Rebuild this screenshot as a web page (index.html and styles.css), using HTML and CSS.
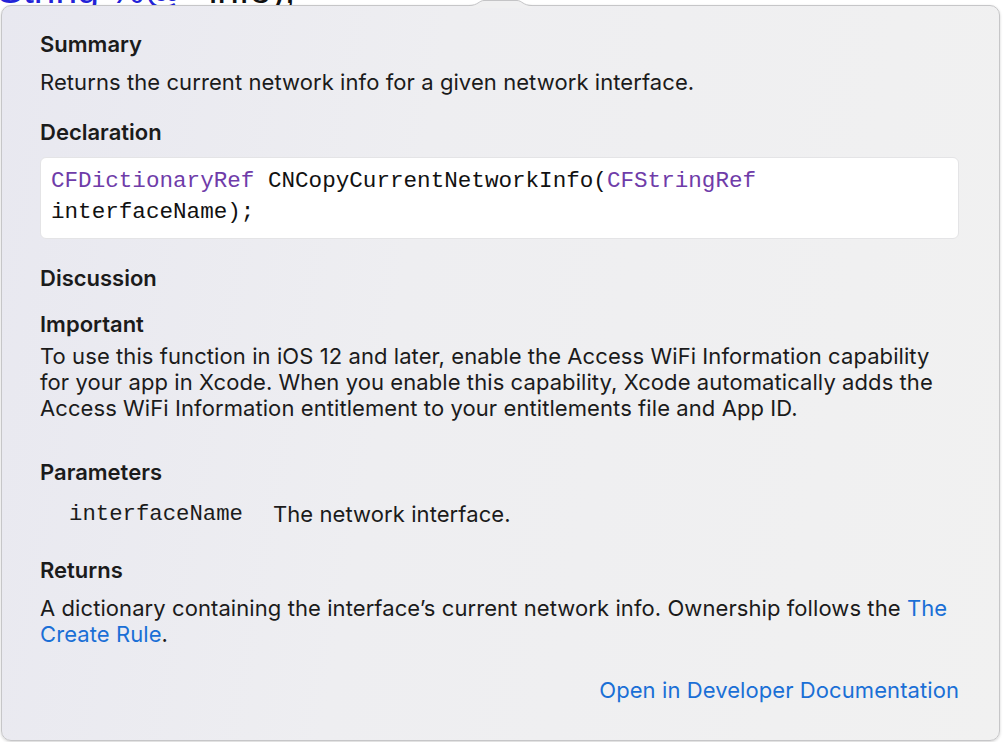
FILE: index.html
```html
<!DOCTYPE html>
<html>
<head>
<meta charset="utf-8">
<link rel="stylesheet" href="styles.css">
</head>
<body>
<div class="behind">
  <div class="behind-line"><span class="str">String %@"</span> info);</div>
</div>
<div class="popover">
  <svg class="arrow" width="70" height="8" viewBox="0 0 70 8">
    <path d="M2,5.5 C11,5.5 12,0.5 17,0.5 L50,0.5 C55,0.5 56,5.5 65,5.5 L65,8 L2,8 Z" fill="#f0f0f1"/>
    <path d="M2,5.5 C11,5.5 12,0.5 17,0.5 L50,0.5 C55,0.5 56,5.5 65,5.5" fill="none" stroke="#c4c4c6" stroke-width="1"/>
  </svg>
  <h2 class="h h-first">Summary</h2>
  <p class="txt t-summary">Returns the current network info for a given network interface.</p>

  <h2 class="h h-decl">Declaration</h2>
  <div class="code"><span class="kw">CFDictionaryRef</span> CNCopyCurrentNetworkInfo(<span class="kw">CFStringRef</span><br>interfaceName);</div>

  <h2 class="h h-disc">Discussion</h2>
  <h2 class="h h-imp">Important</h2>
  <p class="txt t-imp">To use this function in iOS 12 and later, enable the Access WiFi Information capability for your app in Xcode. When you enable this capability, Xcode automatically adds the Access WiFi Information entitlement to your entitlements file and App ID.</p>

  <h2 class="h h-params">Parameters</h2>
  <div class="param">
    <span class="pname">interfaceName</span>
    <span class="pdesc">The network interface.</span>
  </div>

  <h2 class="h h-ret">Returns</h2>
  <p class="txt t-ret">A dictionary containing the interface’s current network info. Ownership follows the <a class="link" href="#">The Create Rule</a>.</p>

  <div class="footer"><a class="link" href="#">Open in Developer Documentation</a></div>
</div>
</body>
</html>
```

FILE: styles.css
```css
html, body {
  margin: 0;
  padding: 0;
  background: #ffffff;
  width: 1006px;
  height: 742px;
  overflow: hidden;
}

body {
  font-family: Inter, "Liberation Sans", Arial, sans-serif;
  color: #1b1b1b;
}

.behind {
  height: 5px;
  overflow: hidden;
}

.behind-line {
  font-family: "Liberation Sans", Arial, sans-serif;
  font-size: 39px;
  line-height: 39px;
  margin-top: -30px;
  margin-left: -3px;
  white-space: nowrap;
  color: #111;
}

.behind-line .str {
  color: #2323d8;
}

.popover {
  position: relative;
  margin-left: 1px;
  width: 999px;
  height: 736px;
  box-sizing: border-box;
  border: 1px solid #c6c6c8;
  border-radius: 10px;
  background: linear-gradient(100deg, #e8e8f0 0%, #eeeef1 40%, #f1f1f1 100%);
  box-shadow: 0 1px 3px rgba(0, 0, 0, 0.18);
  padding: 25px 40px 0 38px;
}

.arrow {
  position: absolute;
  left: 465px;
  top: -6px;
  display: block;
}

.h {
  margin: 0;
  font-size: 22px;
  line-height: 26px;
  font-weight: 600;
}

.txt {
  margin: 0;
  font-size: 22px;
  line-height: 26px;
  letter-spacing: 0.08px;
}

.t-summary { margin-top: 12px; }
.h-decl { margin-top: 24px; }

.code {
  margin-top: 12px;
  background: #ffffff;
  border: 1px solid #e4e4e6;
  border-radius: 6px;
  padding: 8px 10px 10px 10px;
  font-family: "Liberation Mono", "DejaVu Sans Mono", monospace;
  font-size: 22.6px;
  line-height: 31px;
  color: #111;
}

.kw { color: #6f3ca9; }

.h-disc { margin-top: 26px; }
.h-imp { margin-top: 20px; }
.t-imp { margin-top: 6px; }
.h-params { margin-top: 38px; }

.param {
  margin-top: 16px;
  padding-left: 29px;
  display: flex;
  gap: 30px;
  line-height: 26px;
}

.pname {
  font-family: "Liberation Mono", "DejaVu Sans Mono", monospace;
  font-size: 22.3px;
}

.pdesc {
  font-size: 22px;
  letter-spacing: 0.08px;
}

.h-ret { margin-top: 30px; }
.t-ret { margin-top: 12px; }

.link {
  color: #1a6fd6;
  text-decoration: none;
}

.footer {
  margin-top: 30px;
  display: flex;
  justify-content: flex-end;
  font-size: 22px;
  letter-spacing: 0.08px;
  line-height: 26px;
}
```
